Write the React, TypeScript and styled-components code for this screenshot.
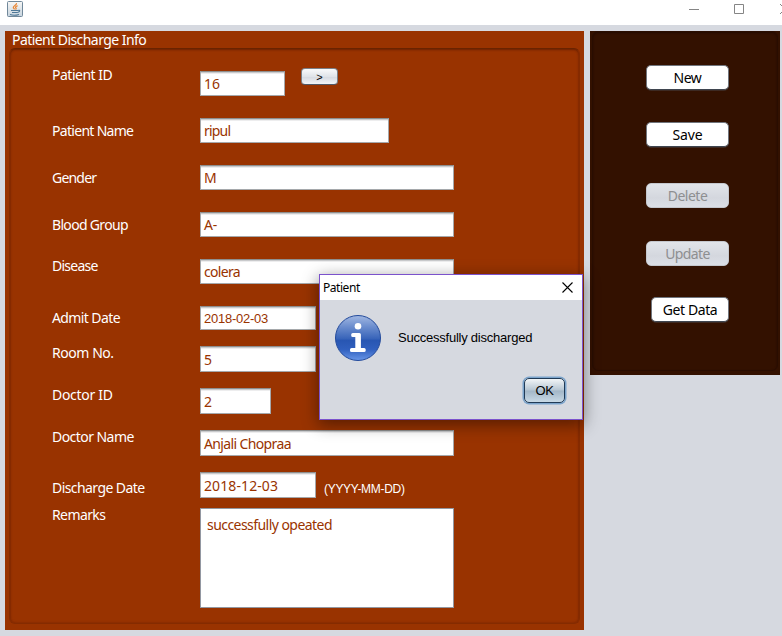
import React from 'react';
import styled, { createGlobalStyle, css } from 'styled-components';

const GlobalStyle = createGlobalStyle`
  * { box-sizing: border-box; }
  html, body { margin: 0; overflow: hidden; }
  body {
    background: #d6d9e0;
    font-family: "Noto Sans", "Open Sans", sans-serif;
    font-size: 14px;
  }
`;

const Window = styled.div`
  position: relative;
  width: 782px;
  height: 636px;
  overflow: hidden;
  background: #d6d9e0;
`;

const TitleBar = styled.header`
  display: flex;
  justify-content: space-between;
  height: 25px;
  background: #fff;
`;

const AppIcon = styled.svg`
  display: block;
  margin: 1px 0 0 7px;
`;

const WindowControls = styled.svg`
  display: block;
`;

const Content = styled.main`
  display: flex;
  align-items: flex-start;
  gap: 6px;
  padding: 6px 2px 0 5px;
`;

const FormPanel = styled.section`
  width: 579px;
  height: 599px;
  padding: 0 4px 6px;
  background: #993300;
`;

const Text = styled.span<{ $spacing?: number }>`
  white-space: nowrap;
  letter-spacing: ${(p) => p.$spacing ?? -0.2}px;
`;

const PanelTitle = styled.h1`
  margin: 0;
  height: 17px;
  padding-left: 3px;
  color: #fff;
  font-size: 14px;
  font-weight: 400;
  line-height: 17px;
`;

const FormBody = styled.div`
  height: 576px;
  padding: 16px 0 0 42px;
  border: 1px solid #842b00;
  border-top-color: #692300;
  border-radius: 6px;
  box-shadow: inset 0 1px 2px rgba(60, 15, 0, 0.35), inset 0 0 3px rgba(60, 15, 0, 0.3);
`;

const Row = styled.div<{ $height: number }>`
  display: flex;
  align-items: flex-start;
  height: ${(p) => p.$height}px;
`;

const Label = styled.label<{ $drop: number }>`
  width: 148px;
  flex: none;
  margin-top: ${(p) => p.$drop}px;
  color: #fff;
  line-height: 20px;
`;

const fieldFrame = css`
  flex: none;
  border: 1px solid #a5a8ab;
  border-top-color: #8e8f8f;
  background: #fff;
  color: #993300;
`;

const Field = styled.div<{ $width: number; $height: number; $drop: number; $small?: boolean }>`
  ${fieldFrame}
  display: flex;
  align-items: center;
  width: ${(p) => p.$width}px;
  height: ${(p) => p.$height}px;
  margin-top: ${(p) => p.$drop}px;
  padding-left: 3px;
  line-height: 19px;
  box-shadow: inset 0 1px 0 #c9cacc, inset 0 2px 0 #ededee;
  ${(p) => p.$small && css`font-family: "Liberation Sans", sans-serif; font-size: 13px;`}
`;

const Remarks = styled.div`
  ${fieldFrame}
  width: 254px;
  height: 100px;
  margin-top: 3px;
  padding: 6px 6px 0;
  border-color: #9297a1;
  line-height: 20px;
`;

const FormatHint = styled.span`
  margin: 9px 0 0 8px;
  color: #fff;
  font: 12px/16px "Liberation Sans", sans-serif;
  letter-spacing: -0.3px;
`;

const LookupButton = styled.button`
  width: 37px;
  height: 17px;
  margin: 3px 0 0 16px;
  padding: 0;
  border: 1px solid #7b8088;
  border-bottom-color: #515967;
  border-radius: 4px;
  background: linear-gradient(#f9fafb, #e0e4e9 50%, #d5d9e0 52%, #f1f4f8);
  color: #000;
  font: 11px/14px "Liberation Sans", sans-serif;
`;

const SidePanel = styled.aside`
  width: 190px;
  height: 344px;
  padding: 0 2px 4px;
  background: #331100;
`;

const SideBody = styled.div`
  display: flex;
  flex-direction: column;
  align-items: flex-end;
  height: 340px;
  padding: 33px 48px 0 0;
  border: 1px solid #290d00;
  border-radius: 6px;
  box-shadow: inset 0 1px 2px rgba(20, 5, 0, 0.5);
`;

const ActionButton = styled.button<{ $gap?: number; $width?: number }>`
  width: ${(p) => p.$width ?? 83}px;
  height: 25px;
  margin: ${(p) => p.$gap ?? 0}px 0 0;
  padding: 1px 0 0;
  border: 1px solid #70757d;
  border-bottom-color: #3f454f;
  border-radius: 5px;
  background: #fff;
  box-shadow: 0 1px 0 rgba(80, 88, 100, 0.35);
  color: #000;
  font: inherit;
  line-height: 20px;

  &:disabled {
    border: 1px solid #c4c7cd;
    background: linear-gradient(#e1e4e9, #d4d7de 60%, #dcdfe6);
    box-shadow: none;
    color: #8e8f91;
  }
`;

const Dialog = styled.div`
  position: absolute;
  left: 319px;
  top: 274px;
  width: 264px;
  height: 146px;
  border: 1px solid #7b52cc;
  background: #d6d9e0;
  box-shadow: 0 4px 15px 1px rgba(0, 0, 0, 0.42);
  color: #000;
`;

const DialogTitle = styled.div`
  display: flex;
  justify-content: space-between;
  align-items: center;
  height: 25px;
  padding: 0 9px 0 3px;
  background: #fff;
  font-size: 12px;
`;

const DialogBody = styled.div`
  display: flex;
  align-items: center;
  gap: 16px;
  height: 75px;
  padding-left: 14px;
  font: 13px/16px "Liberation Sans", sans-serif;
`;

const DialogActions = styled.div`
  display: flex;
  justify-content: flex-end;
  padding: 3px 17px 0 0;
`;

const OkButton = styled.button`
  width: 41px;
  height: 25px;
  padding: 1px 0 0;
  border: 1px solid #203a56;
  border-radius: 5px;
  background: linear-gradient(#f2f5f7, #b6c6d3 48%, #a2b6c7 52%, #c8d9e6);
  box-shadow: 0 0 0 1.5px #7ba4cc;
  color: #000;
  font: 13px/16px "Liberation Sans", sans-serif;
  letter-spacing: -0.4px;
`;

function JavaIcon() {
  return (
    <AppIcon width="16" height="16" viewBox="0 0 16 16">
      <defs>
        <linearGradient id="tile" x2="0" y2="1">
          <stop stopColor="#f7f7f6" />
          <stop offset="1" stopColor="#c7d4de" />
        </linearGradient>
      </defs>
      <rect x=".5" y=".5" width="15" height="15" rx="1" fill="url(#tile)" stroke="#71889a" />
      <path d="M9.5 2.2C10 4 6 4.8 6.3 6.5c.1.8.9 1 1.2 1.9M10.7 4.8C8.8 5.4 7.8 6.3 9 7.1c.5.4.1.9-.5 1.3" fill="none" stroke="#e9832f" strokeWidth="1.2" />
      <path d="M4 9.5h7M5 11.5h5.5M3 13.5c2.5.9 6.5.8 9-.1M11 9.6c2-1 2.8.9-.4 1.9" fill="none" stroke="#4e7897" strokeWidth="1.1" />
    </AppIcon>
  );
}

function InfoIcon() {
  return (
    <svg width="48" height="48" viewBox="0 0 48 48">
      <defs>
        <linearGradient id="info" x2="0" y2="1">
          <stop stopColor="#a2b8e2" />
          <stop offset=".25" stopColor="#6b8dce" />
          <stop offset=".52" stopColor="#3763b9" />
          <stop offset=".55" stopColor="#2856b2" />
          <stop offset=".75" stopColor="#305fbe" />
          <stop offset="1" stopColor="#6896e8" />
        </linearGradient>
      </defs>
      <circle cx="24" cy="24" r="22.5" fill="url(#info)" stroke="#244b9c" />
      <circle cx="24" cy="12.2" r="3.3" fill="#fff" />
      <path d="M18.8 19H25.3q1.6 0 1.6 1.6V34h3.2q1.6 0 1.6 1.6v1q0 1.5-1.6 1.5H17.6q-1.6 0-1.6-1.5v-1q0-1.6 1.6-1.6h3.7V23h-2.5q-1.6 0-1.6-1.5v-.9q0-1.6 1.6-1.6z" fill="#fff" />
    </svg>
  );
}

type Entry = {
  label: string;
  value: string;
  height: number;
  width: number;
  fieldHeight: number;
  labelDrop: number;
  fieldDrop: number;
  spacing?: number;
  valueSpacing?: number;
  small?: boolean;
  extra?: React.ReactNode;
};

const entries: Entry[] = [
  { label: 'Patient ID', value: '16', height: 53, width: 85, fieldHeight: 25, labelDrop: 0, fieldDrop: 6, spacing: -0.5, valueSpacing: 0, extra: <LookupButton>&gt;</LookupButton> },
  { label: 'Patient Name', value: 'ripul', height: 47, width: 189, fieldHeight: 25, labelDrop: 3, fieldDrop: 0, spacing: -0.7, valueSpacing: -0.8 },
  { label: 'Gender', value: 'M', height: 47, width: 254, fieldHeight: 25, labelDrop: 3, fieldDrop: 0, spacing: -0.8 },
  { label: 'Blood Group', value: 'A-', height: 44, width: 254, fieldHeight: 25, labelDrop: 3, fieldDrop: 0, spacing: -0.68 },
  { label: 'Disease', value: 'colera', height: 50, width: 254, fieldHeight: 25, labelDrop: 0, fieldDrop: 3, spacing: -0.75, valueSpacing: -0.7 },
  { label: 'Admit Date', value: '2018-02-03', height: 37, width: 116, fieldHeight: 24, labelDrop: 2, fieldDrop: 0, small: true, spacing: -0.6, valueSpacing: -0.25 },
  { label: 'Room No.', value: '5', height: 42, width: 116, fieldHeight: 26, labelDrop: 0, fieldDrop: 3, spacing: -0.45 },
  { label: 'Doctor ID', value: '2', height: 42, width: 71, fieldHeight: 26, labelDrop: 0, fieldDrop: 3, spacing: -0.3 },
  { label: 'Doctor Name', value: 'Anjali Chopraa', height: 45, width: 254, fieldHeight: 26, labelDrop: 0, fieldDrop: 3, spacing: -0.55, valueSpacing: -0.63 },
  { label: 'Discharge Date', value: '2018-12-03', height: 33, width: 116, fieldHeight: 26, labelDrop: 6, fieldDrop: 0, spacing: -0.57, valueSpacing: 0.1, extra: <FormatHint>(YYYY-MM-DD)</FormatHint> },
];

export default function App() {
  return (
    <>
      <GlobalStyle />
      <Window>
        <TitleBar>
          <JavaIcon />
          <WindowControls width="96" height="25" viewBox="0 0 96 25" fill="none" stroke="#858585">
            <path d="M3 9.5h10M48.5 4.5h9v9h-9zM94 4l10 10M94 14L104 4" />
          </WindowControls>
        </TitleBar>
        <Content>
          <FormPanel>
            <PanelTitle><Text $spacing={-0.56}>Patient Discharge Info</Text></PanelTitle>
            <FormBody>
              {entries.map((e) => (
                <Row key={e.label} $height={e.height}>
                  <Label $drop={e.labelDrop}><Text $spacing={e.spacing}>{e.label}</Text></Label>
                  <Field $width={e.width} $height={e.fieldHeight} $drop={e.fieldDrop} $small={e.small}>
                    <Text $spacing={e.valueSpacing}>{e.value}</Text>
                  </Field>
                  {e.extra}
                </Row>
              ))}
              <Row $height={103}>
                <Label $drop={0}><Text $spacing={-0.6}>Remarks</Text></Label>
                <Remarks><Text $spacing={-0.55}>successfully opeated</Text></Remarks>
              </Row>
            </FormBody>
          </FormPanel>
          <SidePanel>
            <SideBody>
              <ActionButton><Text $spacing={-0.5}>New</Text></ActionButton>
              <ActionButton $gap={32}><Text $spacing={-0.1}>Save</Text></ActionButton>
              <ActionButton $gap={36} disabled><Text $spacing={-0.5}>Delete</Text></ActionButton>
              <ActionButton $gap={33} disabled><Text $spacing={-0.6}>Update</Text></ActionButton>
              <ActionButton $gap={31} $width={78}><Text $spacing={-0.4}>Get Data</Text></ActionButton>
            </SideBody>
          </SidePanel>
        </Content>
        <Dialog role="dialog">
          <DialogTitle>
            <Text $spacing={-0.45}>Patient</Text>
            <svg width="11" height="11" viewBox="0 0 11 11" stroke="#000" strokeWidth="1.1">
              <path d="M.5.5l10 10M10.5.5l-10 10" />
            </svg>
          </DialogTitle>
          <DialogBody>
            <InfoIcon />
            <Text $spacing={-0.23}>Successfully discharged</Text>
          </DialogBody>
          <DialogActions><OkButton>OK</OkButton></DialogActions>
        </Dialog>
      </Window>
    </>
  );
}
